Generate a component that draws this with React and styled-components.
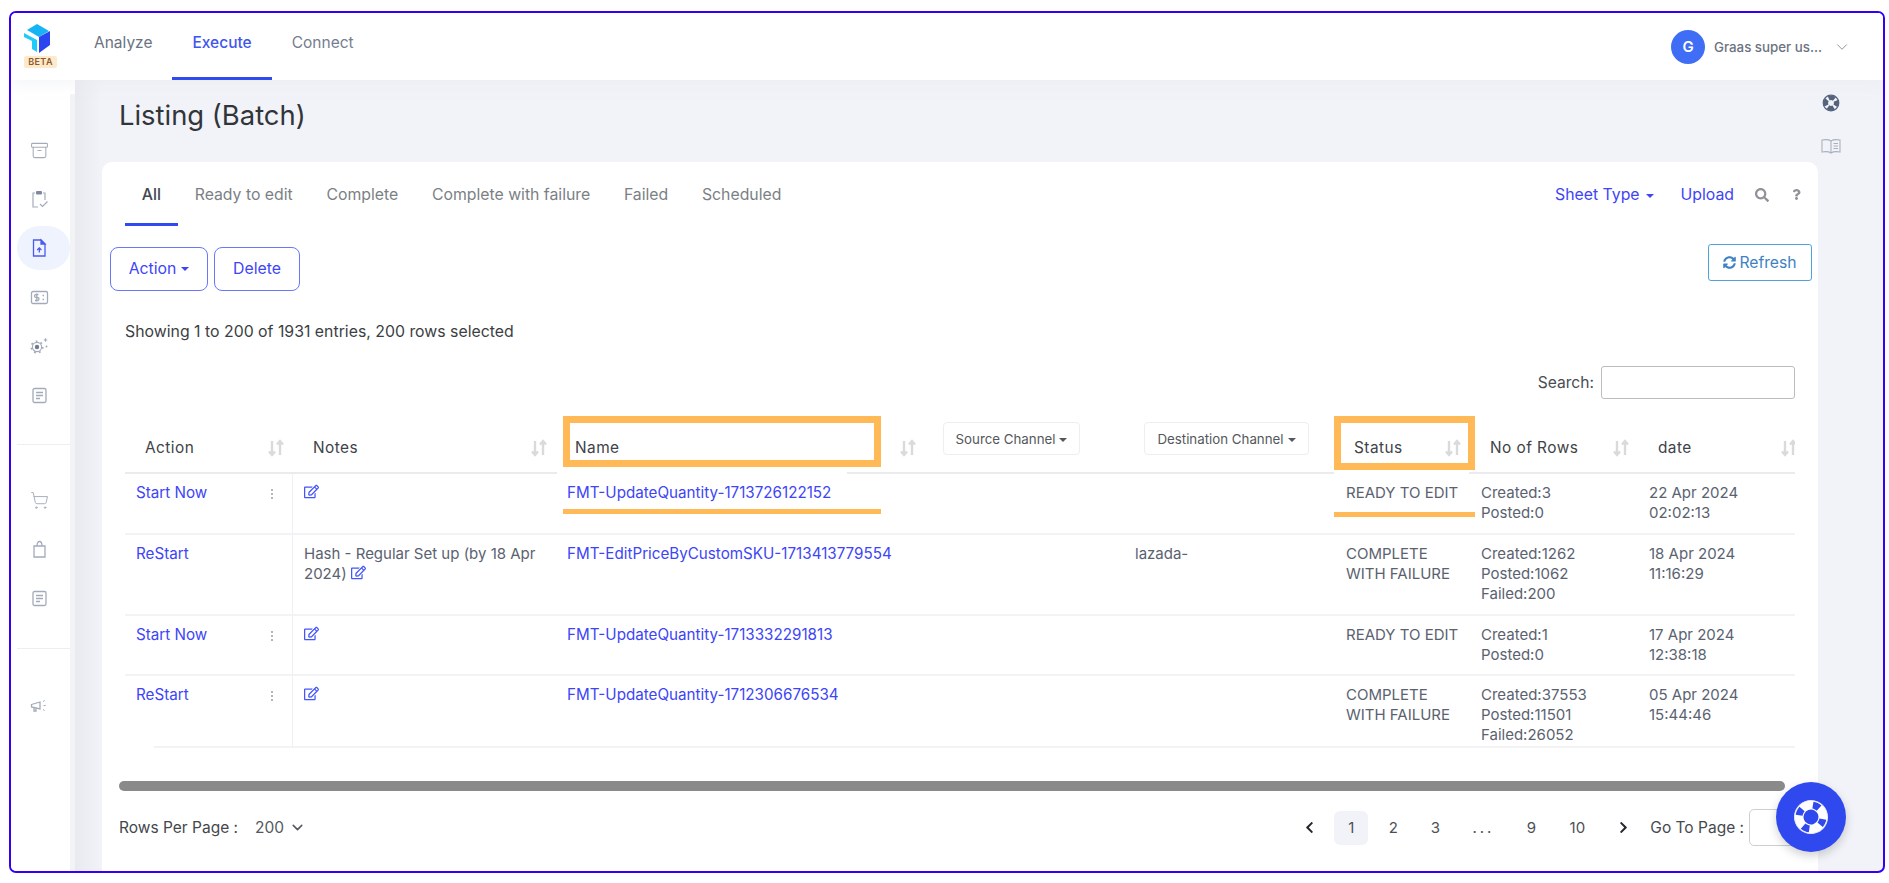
import React from 'react';
import styled, { createGlobalStyle } from 'styled-components';
import { Archive, ShoppingCart, ChevronDown } from 'lucide-react';
import { FaRegEdit, FaSyncAlt, FaSearch, FaQuestion, FaChevronLeft, FaChevronRight } from 'react-icons/fa';

const Global = createGlobalStyle`
  html, body { margin: 0; padding: 0; background: #fff; }
  body { font-family: Inter, "Noto Sans", sans-serif; font-size: 15px; }
  * { box-sizing: border-box; }
`;

const BLUE = '#3d45f7';

const Frame = styled.div`
  position: relative;
  margin: 11px 0 0 9px;
  width: 1876px;
  height: 862px;
  border: 2px solid #3300f5;
  border-radius: 7px;
  overflow: hidden;
  display: flex;
  flex-direction: column;
  background: #f1f3f8;
`;
const Topbar = styled.header`
  height: 67px;
  flex: none;
  background: #fff;
  display: flex;
  align-items: stretch;
  box-shadow: 0 6px 12px rgba(230, 232, 238, 0.35);
  position: relative;
  z-index: 1;
`;
const Brand = styled.div`
  width: 63px;
  flex: none;
  display: flex;
  flex-direction: column;
  align-items: flex-start;
  padding: 11px 0 0 13px;
`;
const BetaTag = styled.span`
  margin-top: 2px;
  width: 33px;
  height: 12px;
  background: #fdeacb;
  color: #8d5a2c;
  border-radius: 2px;
  font-size: 9px;
  font-weight: 600;
  line-height: 12px;
  text-align: center;
  letter-spacing: 0.4px;
`;
const NavLink = styled.a`
  display: flex;
  align-items: center;
  padding: 0 20px 5px;
  font-size: 15.5px;
  color: ${p => (p.$active ? '#3f56ee' : p.$muted ? '#757d90' : '#6b7280')};
  font-weight: ${p => (p.$active ? 500 : 400)};
  border-bottom: 3px solid ${p => (p.$active ? '#2f4af0' : 'transparent')};
`;
const UserArea = styled.div`
  margin-left: auto;
  display: flex;
  align-items: center;
  padding: 0 32px 0 0;
`;
const Avatar = styled.div`
  width: 34px;
  height: 34px;
  border-radius: 50%;
  background: #3f6df5;
  color: #fff;
  font-size: 15px;
  font-weight: 600;
  display: flex;
  align-items: center;
  justify-content: center;
`;
const UserName = styled.span`
  margin: 0 11px 0 9px;
  font-size: 13.3px;
  font-weight: 500;
  color: #6b7280;
`;
const Body = styled.div`
  flex: 1;
  display: flex;
  min-height: 0;
`;
const Sidebar = styled.aside`
  width: 64px;
  flex: none;
  background:
    linear-gradient(#fff, #fff) 0 0 / 100% 14px no-repeat,
    linear-gradient(to right, #fff 59px, #f2f3f5 59px);
  padding-top: 48px;
`;
const SideGroup = styled.div`
  margin-left: 6px;
  width: 53px;
  display: flex;
  flex-direction: column;
  gap: 5px;
  padding: ${p => (p.$first ? '0 0 27px' : p.$last ? '35px 0 0' : '33px 0 28px')};
  border-bottom: ${p => (p.$last ? 'none' : '1px solid #eceef2')};
`;
const SideItem = styled.div`
  height: 44px;
  border-radius: 22px;
  padding-left: 13px;
  display: flex;
  align-items: center;
  background: ${p => (p.$active ? '#eef3fd' : 'transparent')};
  color: ${p => (p.$active ? '#4a5cf0' : '#a3abba')};
`;
const Main = styled.main`
  flex: 1;
  min-width: 0;
  display: flex;
  flex-direction: column;
  padding-left: 27px;
  background: linear-gradient(to right, #e9eaf0, #f1f3f8 27px);
`;
const Title = styled.h1`
  margin: 19px 0 31px 17px;
  font-size: 27.4px;
  line-height: 32px;
  font-weight: 400;
  color: #31353a;
`;
const Card = styled.section`
  flex: 1;
  background: #fff;
  border-radius: 10px 10px 0 0;
  display: flex;
  flex-direction: column;
`;
const Rail = styled.aside`
  width: 65px;
  flex: none;
  display: flex;
  flex-direction: column;
  align-items: flex-start;
  gap: 24px;
  padding: 13px 0 0 3px;
  color: #a9b0bd;
`;
const TabsRow = styled.div`
  height: 64px;
  flex: none;
  padding: 0 16px 0 23px;
  display: flex;
  align-items: stretch;
`;
const Tab = styled.a`
  display: flex;
  align-items: center;
  padding: 3px 16.85px 0;
  font-size: 15.8px;
  color: ${p => (p.$active ? '#424750' : '#7b7f86')};
  font-weight: ${p => (p.$active ? 500 : 400)};
  border-bottom: 3px solid ${p => (p.$active ? '#2f4af0' : 'transparent')};
`;
const TabTools = styled.div`
  margin-left: auto;
  display: flex;
  align-items: center;
  color: ${BLUE};
  font-size: 15.8px;
  padding-top: 1px;
`;
const Caret = styled.i`
  display: inline-block;
  margin-left: ${p => p.$gap || 6}px;
  border-left: 4px solid transparent;
  border-right: 4px solid transparent;
  border-top: 4px solid currentColor;
  vertical-align: middle;
`;
const ToolLink = styled.a`
  margin-left: 27px;
  color: ${BLUE};
`;
const ToolIcon = styled.span`
  display: flex;
  margin-left: ${p => p.$gap}px;
  color: #8f9298;
`;
const ActionRow = styled.div`
  margin-top: 18px;
  padding: 0 6px 0 8px;
  display: flex;
  align-items: flex-start;
  gap: 6px;
`;
const OutlineBtn = styled.button`
  margin-top: 3px;
  height: 44px;
  width: ${p => p.$w}px;
  border: 1px solid #6878f8;
  border-radius: 8px;
  background: #fff;
  color: ${BLUE};
  font: 400 15.8px Inter, sans-serif;
  padding: 0 0 2px;
`;
const RefreshBtn = styled.button`
  margin-left: auto;
  width: 104px;
  height: 37px;
  border: 1px solid #4ea4d8;
  border-radius: 3px;
  background: #fff;
  color: #3f82c4;
  font: 400 15.7px Inter, sans-serif;
  padding: 0;
  display: flex;
  align-items: center;
  justify-content: center;
  gap: 3px;
`;
const Showing = styled.p`
  margin: 31px 0 0 23px;
  line-height: 20px;
  font-size: 15.85px;
  color: #3c3f44;
`;
const SearchRow = styled.label`
  margin: 24px 23px 0 0;
  display: flex;
  justify-content: flex-end;
  align-items: center;
  gap: 7px;
  font-size: 15.6px;
  color: #4a4d52;
`;
const SearchInput = styled.input`
  width: 194px;
  height: 33px;
  border: 1px solid #bcbcbc;
  border-radius: 3px;
  background: #fff;
`;
const TableWrap = styled.div`
  position: relative;
  margin: 13px 23px 0;
`;
const Table = styled.table`
  width: 1670px;
  table-layout: fixed;
  border-collapse: separate;
  border-spacing: 0;
`;
const HeadRow = styled.tr`
  height: 62px;
`;
const Th = styled.th`
  padding: 0;
  vertical-align: bottom;
  border-bottom: 2px solid #ebebee;
  font-weight: 400;
  text-align: left;
  overflow: hidden;
`;
const HeadInner = styled.div`
  display: flex;
  align-items: center;
  justify-content: space-between;
  padding: 0 ${p => (p.$flush ? 0 : 9)}px 14px ${p => p.$pad || 20}px;
  margin-right: ${p => (p.$flush ? -2 : 0)}px;
  font-size: 15.4px;
  letter-spacing: 0.45px;
  color: #404348;
  line-height: 20px;
`;
const FilterWrap = styled.div`
  padding: 0 0 17px ${p => p.$pad}px;
`;
const FilterBtn = styled.button`
  height: 33px;
  width: ${p => p.$w}px;
  border: 1px solid #eeeeef;
  border-radius: 4px;
  background: #fff;
  color: #54575c;
  font: 400 13.3px Inter, sans-serif;
  padding: 0;
`;
const Tr = styled.tr`
  height: ${p => p.$h}px;
`;
const Td = styled.td`
  position: relative;
  padding: 9px 11px 0;
  vertical-align: top;
  line-height: 20px;
  font-size: 15px;
  color: #5a6270;
  border-bottom: 2px solid #f3f3f5;
  ${p => p.$divider && 'border-right: 1px solid #eff0f3;'}
`;
const FirstTd = styled(Td)`
  border-bottom: ${p => (p.$inset ? 'none' : '2px solid #f3f3f5')};
  &::after {
    content: ${p => (p.$inset ? '""' : 'none')};
    position: absolute;
    left: 29px;
    right: 0;
    bottom: 0;
    height: 2px;
    background: #f3f3f5;
  }
`;
const CellLink = styled.a`
  color: ${BLUE};
  font-size: 15.2px;
`;
const EditIcon = styled.span`
  color: #4456f6;
  font-size: 15px;
  margin-left: ${p => p.$gap || 0}px;
  vertical-align: -1px;
`;
const ActionCell = styled.div`
  display: flex;
  justify-content: space-between;
  align-items: flex-start;
  padding-right: 8px;
`;
const Kebab = styled.span`
  display: flex;
  flex-direction: column;
  gap: 2px;
  padding-top: 6px;
  i { width: 2px; height: 2px; background: #9a9da5; border-radius: 50%; }
`;
const Callout = styled.div`
  position: absolute;
  left: ${p => p.$x}px;
  top: ${p => p.$y}px;
  width: ${p => p.$w}px;
  height: ${p => p.$h}px;
  border: 7px solid #ffb957;
  pointer-events: none;
`;
const CalloutLine = styled.div`
  position: absolute;
  left: ${p => p.$x}px;
  top: ${p => p.$y}px;
  width: ${p => p.$w}px;
  height: 5px;
  background: #ffb957;
`;
const HeaderGap = styled.div`
  position: absolute;
  left: ${p => p.$x}px;
  top: 58px;
  width: ${p => p.$w}px;
  height: 5px;
  background: #fff;
`;
const ScrollThumb = styled.div`
  margin: 33px 33px 0 17px;
  height: 10px;
  flex: none;
  border-radius: 5px;
  background: #8a8a8a;
`;
const Footer = styled.div`
  margin-top: 18px;
  height: 37px;
  padding: 0 3px 0 17px;
  display: flex;
  align-items: center;
  font-size: 15.5px;
  color: #44474c;
`;
const RowsValue = styled.span`
  margin-left: 17px;
  color: #55585e;
  display: inline-flex;
  align-items: center;
  gap: 5px;
`;
const Pager = styled.nav`
  margin-left: auto;
  display: flex;
  align-items: center;
  gap: 8px;
  font-size: 15px;
`;
const PageItem = styled.span`
  width: ${p => p.$w || 34}px;
  height: 34px;
  margin: ${p => (p.$wide ? '0 4px' : 0)};
  border-radius: 6px;
  display: flex;
  align-items: center;
  justify-content: center;
  letter-spacing: ${p => p.$spaced || 0}px;
  color: #4c4f55;
  background: ${p => (p.$current ? '#f1f3f8' : 'transparent')};
  svg { color: #26282c; }
`;
const GotoLabel = styled.span`
  margin-left: 10px;
  color: #46494e;
`;
const GotoInput = styled.input`
  margin-left: 5px;
  width: 66px;
  height: 37px;
  border: 1px solid #cfcfd2;
  border-radius: 5px;
`;
const Fab = styled.div`
  position: absolute;
  right: 37px;
  bottom: 19px;
  width: 70px;
  height: 70px;
  border-radius: 50%;
  background: #3049ee;
  box-shadow: 0 4px 10px rgba(0, 0, 0, 0.18);
  display: flex;
  align-items: center;
  justify-content: center;
  z-index: 2;
`;

const Logo = () => (
  <svg width="27" height="30" viewBox="0 0 27 30">
    <polygon points="13,0 25,7 15,13 3,6" fill="#17b4f5" />
    <polygon points="15,13 26,7 26,21 15,29" fill="#2a45f0" />
    <polygon points="0,9 13,16 13,28 8,25 8,17 0,13" fill="#1fcbf8" />
  </svg>
);
const SortIcon = () => (
  <svg width="16" height="18" viewBox="0 0 16 18" fill="none" stroke="#d9dadc" strokeWidth="2.4">
    <path d="M4 2v14M1 12.5l3 3.5 3-3.5" />
    <path d="M12 16V2M9 5.5L12 2l3 3.5" />
  </svg>
);
const ClipIcon = () => (
  <svg width="19" height="20" viewBox="0 0 19 20" fill="none" stroke="currentColor" strokeWidth="1.2">
    <path d="M5 4H3v14h5M13 4h2v7" />
    <rect x="6" y="2" width="6" height="3.4" rx="1" fill="#7f889c" stroke="none" />
    <path d="M10 15l2.5 2.5 5-5" />
  </svg>
);
const UploadDoc = () => (
  <svg width="19" height="20" viewBox="0 0 19 20" fill="none" stroke="currentColor" strokeWidth="1.3">
    <path d="M3.5 2h7.5l4 4v12h-11.500z" />
    <path d="M11 2v4h4z" fill="currentColor" />
    <path d="M9.300 14.500V10M7.200 12l2.100-2.100 2.100 2.100" />
  </svg>
);
const DollarBox = () => (
  <svg width="19" height="19" viewBox="0 0 19 19" fill="none" stroke="currentColor" strokeWidth="1.3">
    <rect x="1.5" y="3.5" width="16" height="12" rx="1.5" />
    <path d="M8.5 6.5H6a1 1 0 0 0 0 3h1.5a1 1 0 0 1 0 3H5M6.800 5.500v8" />
    <path d="M12.500 7.500h1.500M12.500 11.500h1.500" />
  </svg>
);
const GearAtom = () => (
  <svg width="20" height="20" viewBox="0 0 20 20" fill="none" stroke="currentColor">
    <circle cx="7" cy="11" r="4.6" strokeWidth="1.1" />
    <circle cx="7" cy="11" r="5.8" strokeWidth="1.6" strokeDasharray="1.8 3.26" />
    <circle cx="7" cy="11" r="2.2" fill="#6f7a90" stroke="none" />
    <path d="M15.500 2.200v3.600M13.700 4h3.600M16.500 9.600v1.800M15.600 10.500h1.800" strokeWidth="1.2" />
  </svg>
);
const Doc = () => (
  <svg width="19" height="19" viewBox="0 0 19 19" fill="none" stroke="currentColor" strokeWidth="1.3">
    <rect x="3" y="2.5" width="13" height="14" rx="1.5" />
    <path d="M6 6.500h7M6 9.500h7M6 12.500h4" />
  </svg>
);
const BagIcon = () => (
  <svg width="19" height="20" viewBox="0 0 19 20" fill="none" stroke="currentColor" strokeWidth="1.3">
    <path d="M4 7h11v11H4z" />
    <path d="M7 7c0-6 5-6 5 0" />
  </svg>
);
const Horn = () => (
  <svg width="19" height="18" viewBox="0 0 19 18" fill="none" stroke="currentColor" strokeWidth="1.3">
    <path d="M1.500 7.500L10 5v7l-8.500-2z" />
    <path d="M4 10.500V14h2v-3" />
    <path d="M13 4.500l1.600-1M13.500 8.500h2.200M13 12.500l1.600 1" strokeWidth="1" />
  </svg>
);
const Buoy = () => (
  <svg width="20" height="20" viewBox="0 0 20 20" fill="none">
    <circle cx="10" cy="10" r="7.8" stroke="#55627c" strokeWidth="1.2" />
    <circle cx="10" cy="10" r="5.2" stroke="#55627c" strokeWidth="4.6" strokeDasharray="6 2.17" strokeDashoffset="3" />
  </svg>
);
const BookIcon = () => (
  <svg width="20" height="18" viewBox="0 0 20 18" fill="none" stroke="currentColor" strokeWidth="1.1">
    <path d="M10 4C8 2.600 4.500 2.400 1 3v12c3.500-.6 7-.4 9 1 2-1.400 5.500-1.600 9-1V3c-3.500-.6-7-.4-9 1zM10 4v12" />
    <path d="M12.500 6.500H17M12.500 9H17M12.500 11.500H17" />
  </svg>
);
const FabBuoy = () => (
  <svg width="38" height="38" viewBox="0 0 38 38" fill="none">
    <g transform="rotate(24 19 19)">
      <circle cx="19" cy="19" r="12" stroke="#fff" strokeWidth="9" />
      <circle cx="19" cy="19" r="12" stroke="#3049ee" strokeWidth="7" strokeDasharray="7 11.85" strokeDashoffset="3.5" />
      <circle cx="19" cy="19" r="16.5" stroke="#e6e9ff" strokeWidth="1" />
    </g>
  </svg>
);
const Edit = ({ gap }) => (
  <EditIcon $gap={gap}><FaRegEdit /></EditIcon>
);
const Kebabs = () => (
  <Kebab><i /><i /><i /></Kebab>
);

const HEAD = [
  ['Action', 168, 20],
  ['Notes', 263, 20],
  ['Name', 369, 19],
  ['Source Channel', 199, 18, 137],
  ['Destination Channel', 211, 20, 165],
  ['Status', 135, 19],
  ['No of Rows', 168, 20],
  ['date', 157, 20],
];
const ROWS = [
  { h: 61, act: 'Start Now', kebab: true, name: 'FMT-UpdateQuantity-1713726122152', status: ['READY TO EDIT'], counts: ['Created:3', 'Posted:0'], date: ['22 Apr 2024', '02:02:13'] },
  { h: 81, act: 'ReStart', notes: true, name: 'FMT-EditPriceByCustomSKU-1713413779554', dest: 'lazada-', status: ['COMPLETE', 'WITH FAILURE'], counts: ['Created:1262', 'Posted:1062', 'Failed:200'], date: ['18 Apr 2024', '11:16:29'] },
  { h: 60, act: 'Start Now', kebab: true, name: 'FMT-UpdateQuantity-1713332291813', status: ['READY TO EDIT'], counts: ['Created:1', 'Posted:0'], date: ['17 Apr 2024', '12:38:18'] },
  { h: 72, act: 'ReStart', kebab: true, inset: true, name: 'FMT-UpdateQuantity-1712306676534', status: ['COMPLETE', 'WITH FAILURE'], counts: ['Created:37553', 'Posted:11501', 'Failed:26052'], date: ['05 Apr 2024', '15:44:46'] },
];
const Lines = ({ items }) => items.map((t, i) => <div key={i}>{t}</div>);

export default function App() {
  return (
    <>
      <Global />
      <Frame>
        <Topbar>
          <Brand>
            <Logo />
            <BetaTag>BETA</BetaTag>
          </Brand>
          <NavLink>Analyze</NavLink>
          <NavLink $active>Execute</NavLink>
          <NavLink $muted>Connect</NavLink>
          <UserArea>
            <Avatar>G</Avatar>
            <UserName>Graas super us...</UserName>
            <ChevronDown size={18} strokeWidth={1} color="#6b7280" />
          </UserArea>
        </Topbar>
        <Body>
          <Sidebar>
            <SideGroup $first>
              <SideItem><Archive size={19} strokeWidth={1.3} /></SideItem>
              <SideItem><ClipIcon /></SideItem>
              <SideItem $active><UploadDoc /></SideItem>
              <SideItem><DollarBox /></SideItem>
              <SideItem><GearAtom /></SideItem>
              <SideItem><Doc /></SideItem>
            </SideGroup>
            <SideGroup>
              <SideItem><ShoppingCart size={19} strokeWidth={1.2} /></SideItem>
              <SideItem><BagIcon /></SideItem>
              <SideItem><Doc /></SideItem>
            </SideGroup>
            <SideGroup $last>
              <SideItem><Horn /></SideItem>
            </SideGroup>
          </Sidebar>
          <Main>
            <Title>Listing (Batch)</Title>
            <Card>
              <TabsRow>
                <Tab $active>All</Tab>
                <Tab>Ready to edit</Tab>
                <Tab>Complete</Tab>
                <Tab>Complete with failure</Tab>
                <Tab>Failed</Tab>
                <Tab>Scheduled</Tab>
                <TabTools>
                  <span>Sheet Type<Caret /></span>
                  <ToolLink>Upload</ToolLink>
                  <ToolIcon $gap={21}><FaSearch size={14} /></ToolIcon>
                  <ToolIcon $gap={22}><FaQuestion size={11} /></ToolIcon>
                </TabTools>
              </TabsRow>
              <ActionRow>
                <OutlineBtn $w={98}>Action<Caret $gap={5} /></OutlineBtn>
                <OutlineBtn $w={86}>Delete</OutlineBtn>
                <RefreshBtn><FaSyncAlt size={13} />Refresh</RefreshBtn>
              </ActionRow>
              <Showing>Showing 1 to 200 of 1931 entries, 200 rows selected</Showing>
              <SearchRow>Search:<SearchInput /></SearchRow>
              <TableWrap>
                <Table>
                  <colgroup>
                    {HEAD.map(h => <col key={h[0]} width={h[1]} />)}
                  </colgroup>
                  <thead>
                    <HeadRow>
                      {HEAD.map(([label, , pad, filterW]) => (
                        <Th key={label}>
                          {filterW ? (
                            <FilterWrap $pad={pad}>
                              <FilterBtn $w={filterW}>{label}<Caret $gap={4} /></FilterBtn>
                            </FilterWrap>
                          ) : (
                            <HeadInner $pad={pad} $flush={label === 'date'}>
                              {label}<SortIcon />
                            </HeadInner>
                          )}
                        </Th>
                      ))}
                    </HeadRow>
                  </thead>
                  <tbody>
                    {ROWS.map(r => (
                      <Tr key={r.name} $h={r.h}>
                        <FirstTd $divider $inset={r.inset}>
                          <ActionCell>
                            <CellLink>{r.act}</CellLink>
                            {r.kebab && <Kebabs />}
                          </ActionCell>
                        </FirstTd>
                        <Td>
                          {r.notes ? <>Hash - Regular Set up (by 18 Apr 2024)<Edit gap={4} /></> : <Edit />}
                        </Td>
                        <Td><CellLink>{r.name}</CellLink></Td>
                        <Td />
                        <Td>{r.dest}</Td>
                        <Td><Lines items={r.status} /></Td>
                        <Td><Lines items={r.counts} /></Td>
                        <Td><Lines items={r.date} /></Td>
                      </Tr>
                    ))}
                  </tbody>
                </Table>
                <HeaderGap $x={432} $w={290} />
                <HeaderGap $x={1209} $w={135} />
                <Callout $x={438} $y={4} $w={318} $h={51} />
                <CalloutLine $x={438} $y={97} $w={318} />
                <Callout $x={1209} $y={4} $w={141} $h={54} />
                <CalloutLine $x={1209} $y={100} $w={141} />
              </TableWrap>
              <ScrollThumb />
              <Footer>
                Rows Per Page :
                <RowsValue>200 <ChevronDown size={17} strokeWidth={2.2} /></RowsValue>
                <Pager>
                  <PageItem><FaChevronLeft size={13} /></PageItem>
                  <PageItem $current>1</PageItem>
                  <PageItem>2</PageItem>
                  <PageItem>3</PageItem>
                  <PageItem $w={46} $spaced={3}>...</PageItem>
                  <PageItem>9</PageItem>
                  <PageItem $wide>10</PageItem>
                  <PageItem><FaChevronRight size={13} /></PageItem>
                </Pager>
                <GotoLabel>Go To Page :</GotoLabel>
                <GotoInput />
              </Footer>
            </Card>
          </Main>
          <Rail>
            <Buoy />
            <BookIcon />
          </Rail>
        </Body>
        <Fab><FabBuoy /></Fab>
      </Frame>
    </>
  );
}
